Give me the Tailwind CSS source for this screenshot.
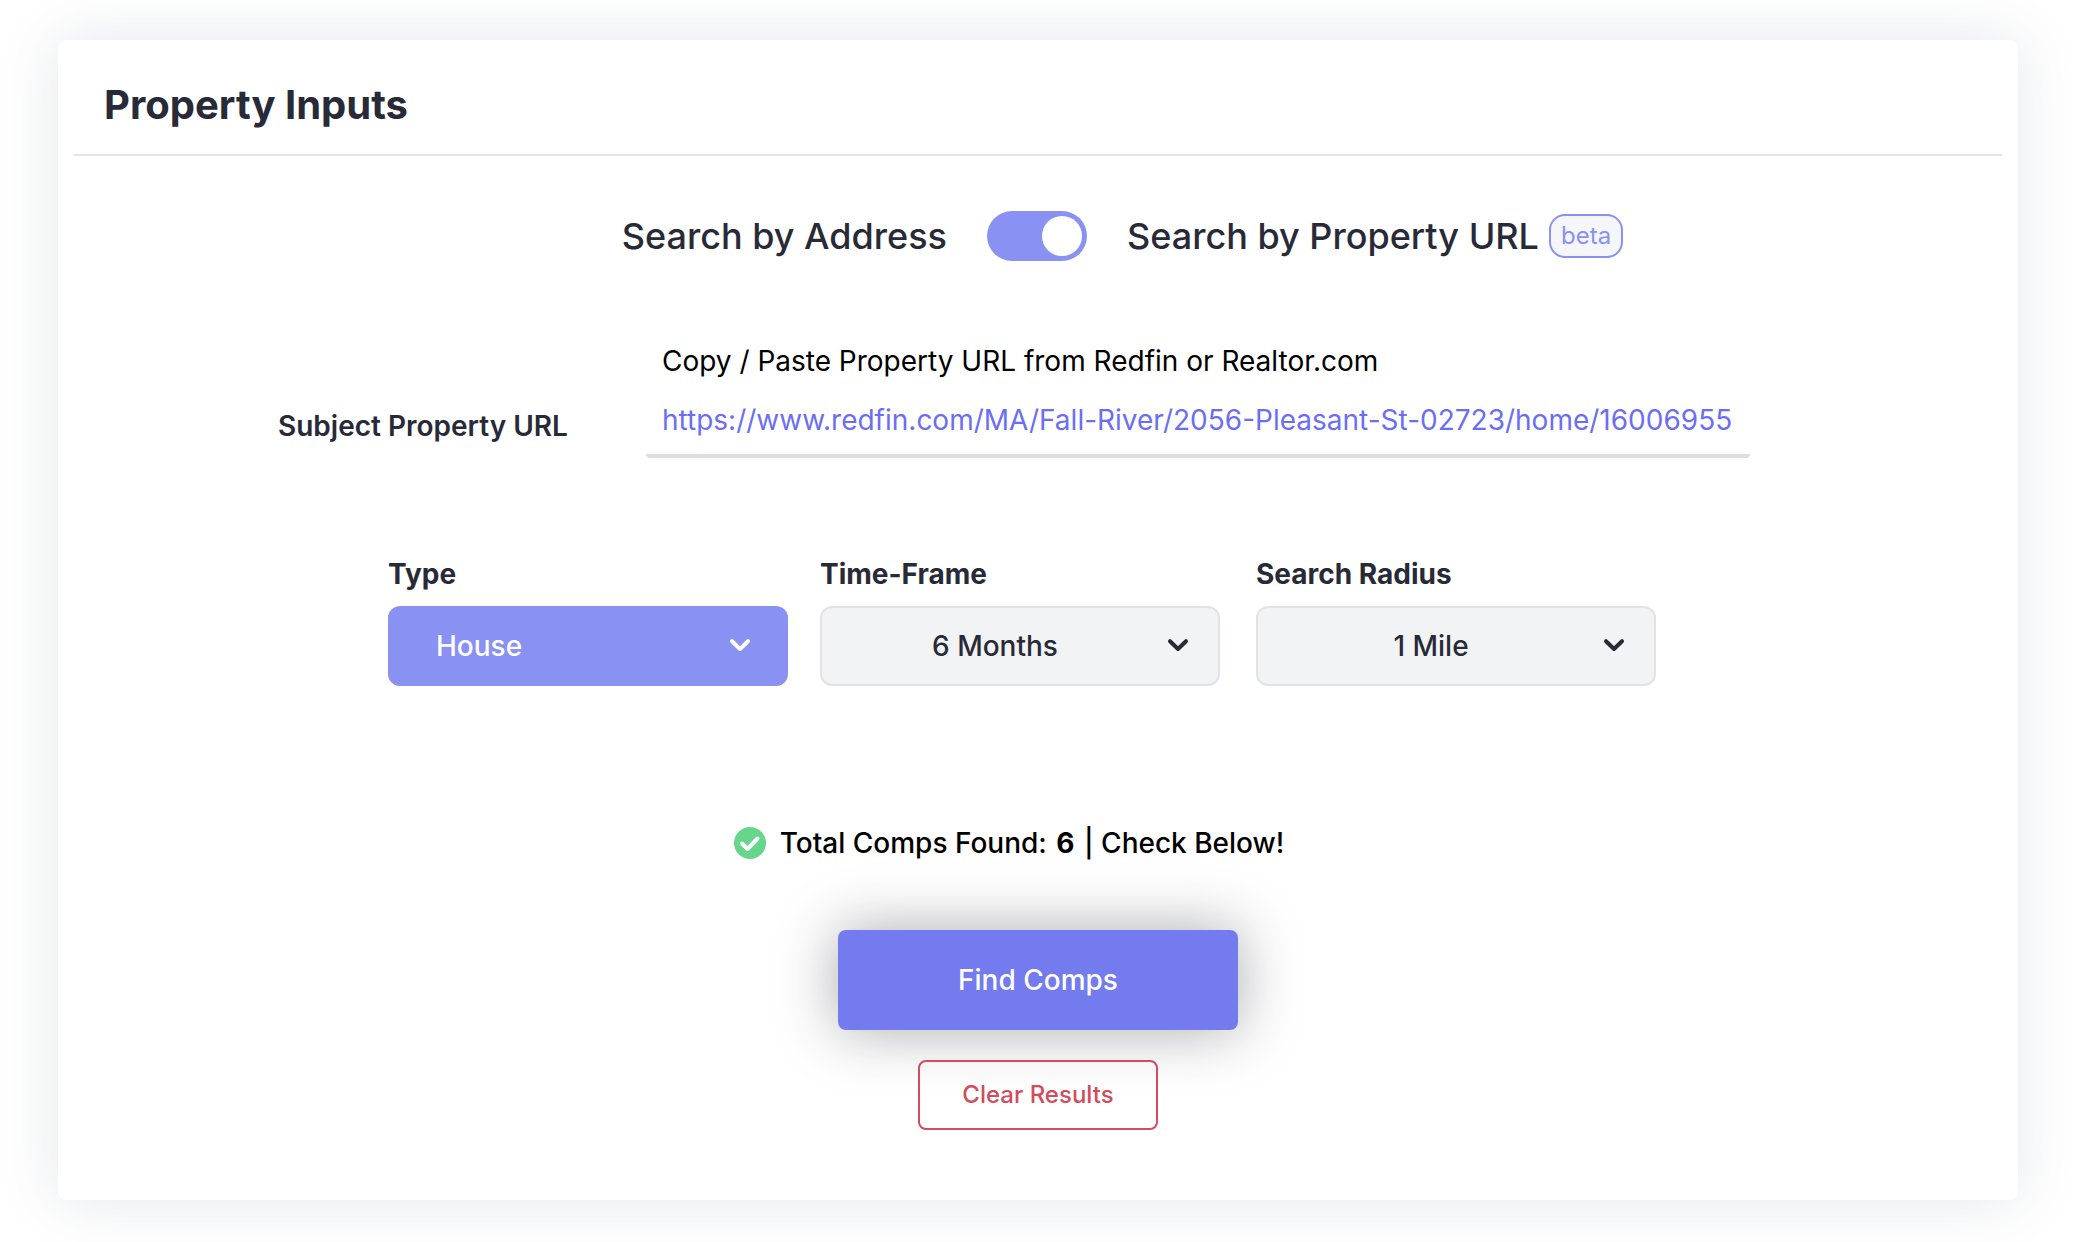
<!DOCTYPE html>
<html lang="en">
<head>
  <meta charset="UTF-8">
  <meta name="viewport" content="width=device-width, initial-scale=1.0">
  <title>Property Inputs</title>
  <script src="https://cdn.jsdelivr.net/npm/@tailwindcss/browser@4"></script>
</head>
<body class="min-h-screen flex bg-white px-[58px] pt-10 pb-[42px] font-['Inter',sans-serif] text-[#282a37]">

  <main class="grow rounded-lg bg-white px-4 shadow-[0_0_60px_rgba(70,85,110,0.14)]">

    <header class="border-b-2 border-[#e4e4e8] px-[30px] pt-10 pb-6">
      <h1 class="text-[40px] leading-[50px] font-bold">Property Inputs</h1>
    </header>

    <form onsubmit="return false">
      <!-- Search mode -->
      <div class="mt-[55px] mr-0.5 grid grid-cols-[1fr_auto_1fr] items-center gap-10 text-4xl leading-[50px] font-medium">
        <label for="mode" class="text-right">Search by Address</label>
        <input id="mode" type="checkbox" role="switch" checked class="h-[50px] w-[100px] appearance-none rounded-full bg-[#8991f2] cursor-pointer before:block before:size-10 before:mt-[5px] before:ml-[5px] before:rounded-full before:bg-white checked:before:ml-[55px]">
        <div class="flex items-center gap-2.5">
          <label for="mode">Search by Property URL</label>
          <span class="rounded-2xl border-2 border-[#8991f2] bg-[#f5f6f9] px-[10px] text-2xl leading-10 font-normal text-[#8991f2]">beta</span>
        </div>
      </div>

      <!-- Property URL -->
      <div class="mt-20 mr-12 flex items-center justify-center gap-[78px] text-[28px] leading-10">
        <label for="url" class="mt-16 mb-3 font-semibold">Subject Property URL</label>
        <div class="w-[1104px]">
          <p class="px-4 text-black">Copy / Paste Property URL from Redfin or Realtor.com</p>
          <input id="url" type="text" value="https://www.redfin.com/MA/Fall-River/2056-Pleasant-St-02723/home/16006955" class="mt-2 h-[69px] w-full rounded border-b-4 border-[#dedee1] px-4 pb-[3px] text-[#6b6ef5] outline-none">
        </div>
      </div>

      <!-- Filters -->
      <div class="mt-24 mr-8 grid grid-cols-[432px_436px_400px] justify-center text-[28px] leading-10">
        <div>
          <label for="type" class="block font-bold">Type</label>
          <div class="relative mt-3 w-[400px]">
            <select id="type" class="h-20 w-full appearance-none rounded-xl bg-[#8991f2] pl-12 pr-[50px] font-medium text-white">
              <option>House</option>
            </select>
            <svg class="pointer-events-none absolute top-8 right-[37px] h-[14px] w-[22px]" viewBox="0 0 22 14" fill="none" stroke="#fff" stroke-width="4" stroke-linecap="round" stroke-linejoin="round"><path d="M3 3.2 11 11 19 3.2"/></svg>
          </div>
        </div>
        <div>
          <label for="timeframe" class="block font-bold">Time-Frame</label>
          <div class="relative mt-3 w-[400px]">
            <select id="timeframe" class="h-20 w-full appearance-none rounded-xl border-2 border-[#e2e3e8] bg-[#f2f3f5] pr-[50px] text-center font-medium">
              <option>6 Months</option>
            </select>
            <svg class="pointer-events-none absolute top-8 right-[31px] h-[14px] w-[22px]" viewBox="0 0 22 14" fill="none" stroke="#282a37" stroke-width="4" stroke-linecap="round" stroke-linejoin="round"><path d="M3 3.2 11 11 19 3.2"/></svg>
          </div>
        </div>
        <div>
          <label for="radius" class="block font-bold">Search Radius</label>
          <div class="relative mt-3 w-[400px]">
            <select id="radius" class="h-20 w-full appearance-none rounded-xl border-2 border-[#e2e3e8] bg-[#f2f3f5] pr-[50px] text-center font-medium">
              <option>1 Mile</option>
            </select>
            <svg class="pointer-events-none absolute top-8 right-[31px] h-[14px] w-[22px]" viewBox="0 0 22 14" fill="none" stroke="#282a37" stroke-width="4" stroke-linecap="round" stroke-linejoin="round"><path d="M3 3.2 11 11 19 3.2"/></svg>
          </div>
        </div>
      </div>

      <!-- Result -->
      <div class="mt-[137px] mr-[58px] flex items-center justify-center gap-[14px] text-[28px] leading-10 font-medium text-black">
        <svg class="size-8" viewBox="0 0 32 32" fill="none"><circle cx="16" cy="16" r="16" fill="#65d68a"/><path d="M8 16.5 13.5 22 23.5 11.5" stroke="#fff" stroke-width="4" stroke-linecap="round" stroke-linejoin="round"/></svg>
        <p>Total Comps Found: <b class="px-0.5">6</b> | Check Below!</p>
      </div>

      <!-- Actions -->
      <div class="mt-[67px] flex flex-col items-center gap-[30px]">
        <button type="submit" class="h-[100px] w-[400px] rounded-lg bg-[#737bef] text-[28px] font-medium text-white shadow-[0_0_60px_rgba(40,42,55,0.4)]">Find Comps</button>
        <button type="reset" class="h-[70px] w-[240px] rounded-lg border-2 border-[#d24c5e] text-2xl font-medium text-[#d24c5e]">Clear Results</button>
      </div>
    </form>
  </main>

</body>
</html>
